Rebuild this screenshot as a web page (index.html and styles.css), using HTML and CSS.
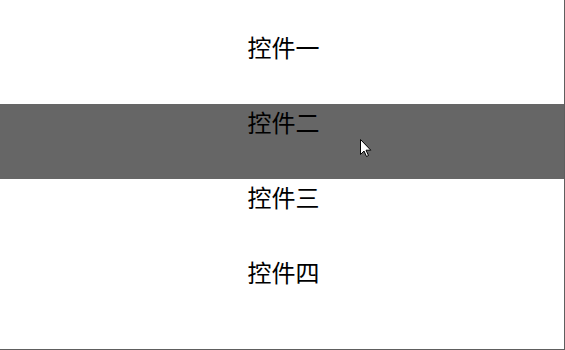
FILE: index.html
```html
<!DOCTYPE html>
<html lang="zh">
<head>
<meta charset="utf-8">
<link rel="stylesheet" href="styles.css">
</head>
<body>
<div class="frame">
  <ul class="list">
    <li class="item">控件一</li>
    <li class="item item-active">控件二</li>
    <li class="item">控件三</li>
    <li class="item">控件四</li>
  </ul>
  <svg class="cursor" width="12" height="19" viewBox="0 0 12 19">
    <path d="M0.5 0.5 L0.5 15.5 L4 12 L6.5 17.5 L8.5 16.5 L6 11.2 L10.8 11.2 Z" fill="#fff" stroke="#000" stroke-width="1" stroke-linejoin="miter"/>
  </svg>
</div>
</body>
</html>
```
FILE: styles.css
```css
html, body {
  margin: 0;
  padding: 0;
  background: #fff;
}
.frame {
  position: relative;
  width: 564px;
  height: 349px;
  border-right: 1px solid #5e5e5e;
  border-bottom: 1px solid #5e5e5e;
  background: #fff;
  overflow: hidden;
}
.list {
  list-style: none;
  margin: 0;
  padding: 29px 0 0 3px;
}
.item {
  height: 75px;
  line-height: 36px;
  text-align: center;
  font-family: "Noto Sans CJK SC", "Noto Sans", sans-serif;
  font-size: 24px;
  color: #000;
}
.item-active {
  background: #666666;
  margin-left: -3px;
  padding-left: 3px;
}
.cursor {
  position: absolute;
  left: 360px;
  top: 139px;
}
```
